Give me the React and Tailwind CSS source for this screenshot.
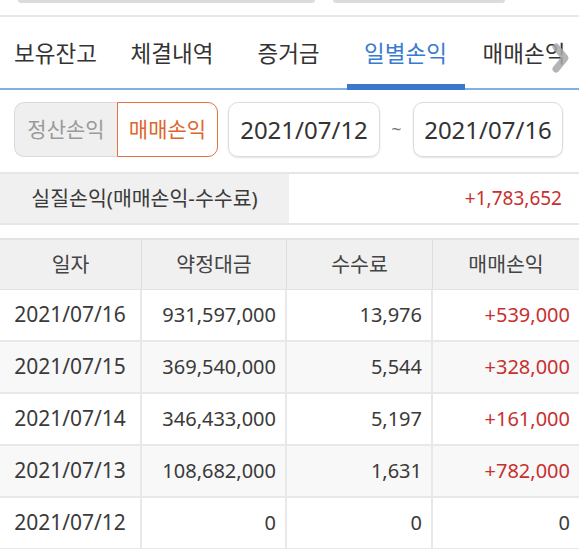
import React from "react";

const rows = [
  ["2021/07/16", "931,597,000", "13,976", "+539,000"],
  ["2021/07/15", "369,540,000", "5,544", "+328,000"],
  ["2021/07/14", "346,433,000", "5,197", "+161,000"],
  ["2021/07/13", "108,682,000", "1,631", "+782,000"],
  ["2021/07/12", "0", "0", "0"],
];

const tabs = [
  { label: "보유잔고", w: "w-[111px]" },
  { label: "체결내역", w: "w-[122px]" },
  { label: "증거금", w: "w-[111px]" },
  { label: "일별손익", w: "w-[123px]", active: true },
  { label: "매매손익", w: "w-[114px]" },
];

export default function App() {
  return (
    <div
      className="w-[579px] h-[549px] overflow-hidden bg-white text-[#333]"
      style={{ fontFamily: '"Noto Sans", "Noto Sans CJK KR", sans-serif' }}
    >
      {/* top strip: bottoms of previous inputs */}
      <div className="h-[17px] border-b-2 border-[#e8e8e8] flex pl-[18px] gap-[18px]">
        <div className="w-[297px] h-[3px] bg-[#dcdcdc] rounded-b-[3px]" />
        <div className="w-[172px] h-[3px] bg-[#dcdcdc] rounded-b-[3px]" />
      </div>

      {/* tabs */}
      <div className="h-[73px] flex border-b-2 border-[#7fb0e6] relative">
        {tabs.map((t) => (
          <div
            key={t.label}
            className={`${t.w} shrink-0 relative flex items-center justify-center text-[22.5px] ${
              t.active ? "text-[#3a7bd0]" : "text-[#333]"
            }`}
          >
            <span className="mt-[2px]">{t.label}</span>
            {t.active && (
              <div className="absolute left-[3px] right-[2px] bottom-[-2px] h-[6px] bg-[#3b78cc]" />
            )}
          </div>
        ))}
        <svg
          className="absolute left-[549px] top-[25px]"
          width="22"
          height="32"
          viewBox="0 0 22 32"
        >
          <path
            d="M7 5 L16 16 L7 27"
            fill="none"
            stroke="#a8a8a8"
            strokeOpacity="0.85"
            strokeWidth="7"
            strokeLinecap="round"
            strokeLinejoin="round"
          />
        </svg>
      </div>

      {/* filter row */}
      <div className="h-[82px] flex items-start pt-[12px] pl-[14px]">
        <div className="flex h-[55px] w-[204px]">
          <div className="w-[103px] h-full bg-[#efefef] border border-[#dadada] border-r-0 rounded-l-[10px] flex items-center justify-center text-[21px] text-[#9a9a9a]">
            정산손익
          </div>
          <div className="w-[101px] h-full bg-white border-[1.5px] border-[#e0733f] rounded-r-[10px] flex items-center justify-center text-[21px] text-[#dd6630]">
            매매손익
          </div>
        </div>
        <div className="ml-[10px] w-[152px] h-[55px] rounded-[10px] border border-[#dcdcdc] shadow-[0_1px_2px_rgba(0,0,0,0.12)] flex items-center justify-center text-[24px] text-[#333]">
          2021/07/12
        </div>
        <div className="w-[33px] h-[55px] flex items-center justify-center text-[18px] text-[#777]">
          ~
        </div>
        <div className="w-[150px] h-[55px] rounded-[10px] border border-[#dcdcdc] shadow-[0_1px_2px_rgba(0,0,0,0.12)] flex items-center justify-center text-[24px] text-[#333]">
          2021/07/16
        </div>
      </div>

      {/* summary */}
      <div className="h-[53px] flex border-y-2 border-[#e6e6e6]">
        <div className="w-[289px] bg-[#f0f0f0] flex items-center justify-center text-[20.5px] text-[#3a3a3a]">
          실질손익(매매손익-수수료)
        </div>
        <div className="flex-1 flex items-center justify-end pr-[17px] text-[19px] text-[#c7302f]">
          +1,783,652
        </div>
      </div>

      {/* table */}
      <div className="mt-[13px] border-t-2 border-[#e2e2e2]">
        <div className="grid grid-cols-[142px_145px_146px_146px] h-[50px] bg-[#f0f0f0] border-b border-[#e2e2e2]">
          {["일자", "약정대금", "수수료", "매매손익"].map((h, i) => (
            <div
              key={h}
              className={`flex items-center justify-center text-[20.5px] text-[#444] ${
                i < 3 ? "border-r border-[#dedede]" : ""
              }`}
            >
              {h}
            </div>
          ))}
        </div>
        {rows.map((r, ri) => (
          <div
            key={r[0]}
            className={`grid grid-cols-[142px_145px_146px_146px] h-[52px] border-b-2 border-[#e8e8e8] ${
              ri % 2 === 1 ? "bg-[#f8f8f8]" : "bg-white"
            }`}
          >
            {r.map((c, i) => (
              <div
                key={i}
                className={`flex items-center ${
                  i === 0 ? "justify-center text-[21px]" : "justify-end pr-[9px] text-[20px]"
                } ${i < 3 ? "border-r-2 border-[#e8e8e8]" : ""} ${
                  i === 3 && c.startsWith("+") ? "text-[#c7302f]" : "text-[#3a3a3a]"
                }`}
              >
                {c}
              </div>
            ))}
          </div>
        ))}
      </div>
    </div>
  );
}
